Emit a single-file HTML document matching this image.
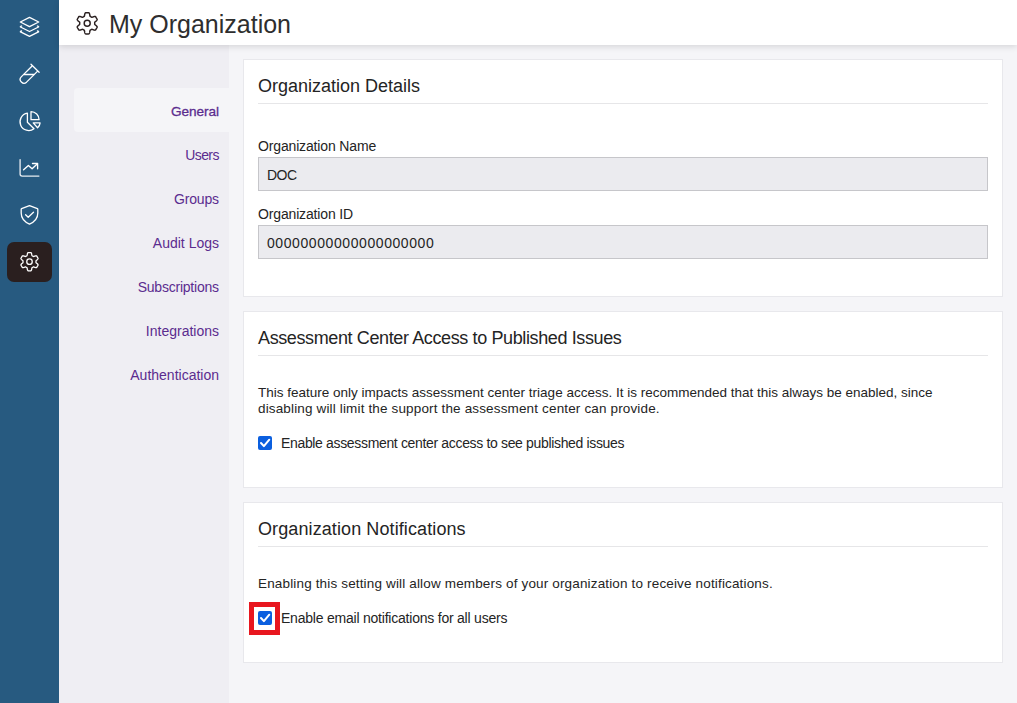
<!DOCTYPE html>
<html><head><meta charset="utf-8">
<style>
*{box-sizing:border-box;margin:0;padding:0}
html,body{width:1017px;height:703px;overflow:hidden;background:#f5f5f8;font-family:"Liberation Sans",sans-serif;color:#242424}
#side{position:absolute;left:0;top:0;width:59px;height:703px;background:#275a80}
#head{position:absolute;left:0;top:0;width:1017px;height:45px;z-index:3}
#head .bg{position:absolute;left:59px;top:0;width:958px;height:45px;background:#fff;box-shadow:0 2px 6px rgba(0,0,0,.12)}
#head .t{position:absolute;left:109px;top:10px;font-size:25px;color:#2e2e2e;white-space:nowrap}
#nav{position:absolute;left:59px;top:45px;width:170px;height:658px;background:#efeef3}
.ni{position:absolute;right:10px;font-size:14px;color:#5b2c8f;white-space:nowrap;text-align:right}
.nact{position:absolute;left:15px;top:43px;width:155px;height:44px;background:#f5f5f8;border-radius:4px 0 0 4px}
.card{position:absolute;left:243px;width:760px;background:#fff;border:1px solid #e8e8ec}
.ct{position:absolute;left:14px;font-size:18px;color:#242424;white-space:nowrap}
.dv{position:absolute;left:14px;width:730px;height:1px;background:#e6e6e8}
.lb{position:absolute;left:14px;font-size:14px;letter-spacing:-0.15px;color:#242424;white-space:nowrap}
.inp{position:absolute;left:14px;width:730px;height:34px;background:#ebebef;border:1px solid #c6c6ca}
.inp span{position:absolute;left:8px;top:9px;font-size:14px;color:#242424;white-space:nowrap}
.p{position:absolute;left:14px;font-size:13.5px;line-height:15.5px;color:#242424;white-space:nowrap}
.cb{position:absolute;left:14px;width:14px;height:14px;background:#0b5fdf;border-radius:2px}
.cb svg{position:absolute;left:0;top:0}
.cl{position:absolute;left:37px;font-size:14px;color:#242424;white-space:nowrap}
.red{position:absolute;left:5px;width:31px;height:33px;border:5px solid #e8161f}
</style></head><body>
<div id="side"><svg width="59" height="703" style="position:absolute;left:0;top:0" fill="none" stroke="#fff" stroke-linecap="round" stroke-linejoin="round">
<g stroke-width="1.3">
<path d="M29.5,17.4 L38.7,22 L29.5,26.6 L20.3,22 Z"/>
<path d="M21.6,26.0 Q20.0,26.6 20.5,27.0 L29.5,31.5 L38.5,27.0 Q39.0,26.6 37.4,26.0"/>
<path d="M21.6,30.9 Q20.0,31.5 20.5,31.9 L29.5,36.4 L38.5,31.9 Q39.0,31.5 37.4,30.9"/>
</g>
<g stroke-width="1.3">
<path d="M31,64.3 L39.1,72.3"/>
<path d="M32.1,66.05 L21.25,76.85 A3.75,3.75 0 0 0 26.55,82.15 L37.4,71.35"/>
<path d="M24.0,74.5 L33.9,74.5"/>
</g>
<g stroke-width="1.3">
<path d="M27.4,113.2 A8.7,8.7 0 1 0 34.0,128.7 L27.4,122.2 Z"/>
<path d="M31,111.6 L31,119.7 L39.1,119.7 A8.1,8.1 0 0 0 31,111.6 Z"/>
<path d="M33.2,122.9 L40.1,122.9 A7.5,7.5 0 0 1 37.6,127.8 Z"/>
</g>
<g stroke-width="1.35">
<path d="M20.1,159.6 L20.1,174 Q20.1,176.1 22.2,176.1 L38.9,176.1" stroke="#e6ebf0"/>
<path d="M23.6,169.8 L28.4,165.4 L32.1,168.8 L37.4,163.7"/>
<path d="M32.5,163.5 L37.6,163.5 L37.6,168.8"/>
</g>
<g stroke-width="1.3">
<path d="M29.5,205.7 L21.6,208.7 Q21.2,208.9 21.2,209.3 L21.2,213 C21.2,218.2 24.5,221.9 29.5,224.1 C34.5,221.9 37.8,218.2 37.8,213 L37.8,209.3 Q37.8,208.9 37.4,208.7 Z"/>
<path d="M25.6,214.8 L28.2,217.3 L33.5,212.3"/>
</g>
<rect x="7" y="242" width="45" height="40" rx="7" fill="#2a1f1f" stroke="none"/>
<g stroke-width="1.3">
<path d="M36.00,261.70 L36.00,261.59 L36.00,261.47 L35.99,261.36 L35.98,261.25 L35.98,261.13 L35.96,261.02 L35.98,260.90 L36.05,260.78 L36.16,260.64 L36.31,260.50 L36.50,260.34 L36.70,260.17 L36.92,259.99 L37.15,259.79 L37.37,259.59 L37.57,259.39 L37.75,259.18 L37.89,258.97 L37.99,258.78 L38.05,258.59 L38.06,258.41 L38.02,258.26 L37.94,258.12 L37.86,257.98 L37.78,257.84 L37.70,257.70 L37.62,257.56 L37.54,257.43 L37.46,257.29 L37.38,257.15 L37.30,257.01 L37.22,256.87 L37.14,256.74 L37.06,256.60 L36.98,256.46 L36.90,256.32 L36.82,256.18 L36.74,256.04 L36.63,255.93 L36.47,255.85 L36.28,255.81 L36.06,255.80 L35.81,255.82 L35.54,255.87 L35.26,255.94 L34.97,256.03 L34.70,256.13 L34.43,256.23 L34.18,256.32 L33.95,256.40 L33.75,256.46 L33.57,256.49 L33.43,256.48 L33.32,256.44 L33.23,256.38 L33.13,256.31 L33.04,256.25 L32.94,256.19 L32.85,256.13 L32.75,256.07 L32.65,256.01 L32.55,255.96 L32.45,255.91 L32.35,255.86 L32.25,255.81 L32.14,255.76 L32.05,255.69 L31.98,255.57 L31.92,255.40 L31.87,255.20 L31.82,254.96 L31.78,254.70 L31.73,254.42 L31.67,254.12 L31.61,253.83 L31.53,253.56 L31.44,253.30 L31.33,253.07 L31.21,252.88 L31.08,252.74 L30.93,252.64 L30.78,252.60 L30.62,252.60 L30.46,252.60 L30.30,252.60 L30.14,252.60 L29.98,252.60 L29.82,252.60 L29.66,252.60 L29.50,252.60 L29.34,252.60 L29.18,252.60 L29.02,252.60 L28.86,252.60 L28.70,252.60 L28.54,252.60 L28.38,252.60 L28.22,252.60 L28.07,252.64 L27.92,252.74 L27.79,252.88 L27.67,253.07 L27.56,253.30 L27.47,253.56 L27.39,253.83 L27.33,254.12 L27.27,254.42 L27.22,254.70 L27.18,254.96 L27.13,255.20 L27.08,255.40 L27.02,255.57 L26.95,255.69 L26.86,255.76 L26.75,255.81 L26.65,255.86 L26.55,255.91 L26.45,255.96 L26.35,256.01 L26.25,256.07 L26.15,256.13 L26.06,256.19 L25.96,256.25 L25.87,256.31 L25.77,256.38 L25.68,256.44 L25.57,256.48 L25.43,256.49 L25.25,256.46 L25.05,256.40 L24.82,256.32 L24.57,256.23 L24.30,256.13 L24.03,256.03 L23.74,255.94 L23.46,255.87 L23.19,255.82 L22.94,255.80 L22.72,255.81 L22.53,255.85 L22.37,255.93 L22.26,256.04 L22.18,256.18 L22.10,256.32 L22.02,256.46 L21.94,256.60 L21.86,256.74 L21.78,256.87 L21.70,257.01 L21.62,257.15 L21.54,257.29 L21.46,257.43 L21.38,257.56 L21.30,257.70 L21.22,257.84 L21.14,257.98 L21.06,258.12 L20.98,258.26 L20.94,258.41 L20.95,258.59 L21.01,258.78 L21.11,258.97 L21.25,259.18 L21.43,259.39 L21.63,259.59 L21.85,259.79 L22.08,259.99 L22.30,260.17 L22.50,260.34 L22.69,260.50 L22.84,260.64 L22.95,260.78 L23.02,260.90 L23.04,261.02 L23.02,261.13 L23.02,261.25 L23.01,261.36 L23.00,261.47 L23.00,261.59 L23.00,261.70 L23.00,261.81 L23.00,261.93 L23.01,262.04 L23.02,262.15 L23.02,262.27 L23.04,262.38 L23.02,262.50 L22.95,262.62 L22.84,262.76 L22.69,262.90 L22.50,263.06 L22.30,263.23 L22.08,263.41 L21.85,263.61 L21.63,263.81 L21.43,264.01 L21.25,264.22 L21.11,264.43 L21.01,264.62 L20.95,264.81 L20.94,264.99 L20.98,265.14 L21.06,265.28 L21.14,265.42 L21.22,265.56 L21.30,265.70 L21.38,265.84 L21.46,265.97 L21.54,266.11 L21.62,266.25 L21.70,266.39 L21.78,266.53 L21.86,266.66 L21.94,266.80 L22.02,266.94 L22.10,267.08 L22.18,267.22 L22.26,267.36 L22.37,267.47 L22.53,267.55 L22.72,267.59 L22.94,267.60 L23.19,267.58 L23.46,267.53 L23.74,267.46 L24.03,267.37 L24.30,267.27 L24.57,267.17 L24.82,267.08 L25.05,267.00 L25.25,266.94 L25.43,266.91 L25.57,266.92 L25.68,266.96 L25.77,267.02 L25.87,267.09 L25.96,267.15 L26.06,267.21 L26.15,267.27 L26.25,267.33 L26.35,267.39 L26.45,267.44 L26.55,267.49 L26.65,267.54 L26.75,267.59 L26.86,267.64 L26.95,267.71 L27.02,267.83 L27.08,268.00 L27.13,268.20 L27.18,268.44 L27.22,268.70 L27.27,268.98 L27.33,269.28 L27.39,269.57 L27.47,269.84 L27.56,270.10 L27.67,270.33 L27.79,270.52 L27.92,270.66 L28.07,270.76 L28.22,270.80 L28.38,270.80 L28.54,270.80 L28.70,270.80 L28.86,270.80 L29.02,270.80 L29.18,270.80 L29.34,270.80 L29.50,270.80 L29.66,270.80 L29.82,270.80 L29.98,270.80 L30.14,270.80 L30.30,270.80 L30.46,270.80 L30.62,270.80 L30.78,270.80 L30.93,270.76 L31.08,270.66 L31.21,270.52 L31.33,270.33 L31.44,270.10 L31.53,269.84 L31.61,269.57 L31.67,269.28 L31.73,268.98 L31.78,268.70 L31.82,268.44 L31.87,268.20 L31.92,268.00 L31.98,267.83 L32.05,267.71 L32.14,267.64 L32.25,267.59 L32.35,267.54 L32.45,267.49 L32.55,267.44 L32.65,267.39 L32.75,267.33 L32.85,267.27 L32.94,267.21 L33.04,267.15 L33.13,267.09 L33.23,267.02 L33.32,266.96 L33.43,266.92 L33.57,266.91 L33.75,266.94 L33.95,267.00 L34.18,267.08 L34.43,267.17 L34.70,267.27 L34.97,267.37 L35.26,267.46 L35.54,267.53 L35.81,267.58 L36.06,267.60 L36.28,267.59 L36.47,267.55 L36.63,267.47 L36.74,267.36 L36.82,267.22 L36.90,267.08 L36.98,266.94 L37.06,266.80 L37.14,266.66 L37.22,266.53 L37.30,266.39 L37.38,266.25 L37.46,266.11 L37.54,265.97 L37.62,265.84 L37.70,265.70 L37.78,265.56 L37.86,265.42 L37.94,265.28 L38.02,265.14 L38.06,264.99 L38.05,264.81 L37.99,264.62 L37.89,264.43 L37.75,264.22 L37.57,264.01 L37.37,263.81 L37.15,263.61 L36.92,263.41 L36.70,263.23 L36.50,263.06 L36.31,262.90 L36.16,262.76 L36.05,262.62 L35.98,262.50 L35.96,262.38 L35.98,262.27 L35.98,262.15 L35.99,262.04 L36.00,261.93 L36.00,261.81Z"/>
<circle cx="29.5" cy="261.7" r="2.75"/>
</g>
</svg></div>
<div id="head"><div class="bg"></div><svg width="120" height="45" style="position:absolute;left:0;top:0" fill="none" stroke="#2a2020" stroke-linecap="round" stroke-linejoin="round" stroke-width="1.45">
<path d="M94.70,23.30 L94.70,23.17 L94.70,23.04 L94.69,22.91 L94.68,22.78 L94.67,22.65 L94.66,22.52 L94.68,22.38 L94.75,22.24 L94.88,22.08 L95.06,21.91 L95.28,21.73 L95.52,21.53 L95.78,21.32 L96.05,21.09 L96.31,20.86 L96.55,20.62 L96.77,20.37 L96.95,20.13 L97.08,19.90 L97.15,19.68 L97.17,19.47 L97.12,19.29 L97.03,19.13 L96.94,18.96 L96.84,18.80 L96.75,18.64 L96.66,18.48 L96.56,18.32 L96.47,18.16 L96.38,18.00 L96.29,17.84 L96.19,17.68 L96.10,17.52 L96.01,17.36 L95.92,17.20 L95.82,17.04 L95.73,16.87 L95.64,16.71 L95.50,16.58 L95.31,16.49 L95.08,16.45 L94.82,16.44 L94.52,16.47 L94.20,16.54 L93.87,16.63 L93.54,16.74 L93.21,16.86 L92.89,16.98 L92.60,17.09 L92.33,17.19 L92.10,17.25 L91.90,17.29 L91.73,17.28 L91.61,17.23 L91.50,17.16 L91.39,17.08 L91.28,17.01 L91.17,16.94 L91.06,16.87 L90.95,16.80 L90.84,16.74 L90.72,16.68 L90.60,16.62 L90.49,16.56 L90.37,16.50 L90.25,16.45 L90.14,16.36 L90.06,16.23 L89.99,16.04 L89.93,15.80 L89.88,15.52 L89.83,15.21 L89.77,14.88 L89.71,14.53 L89.64,14.19 L89.55,13.86 L89.45,13.55 L89.33,13.28 L89.19,13.05 L89.04,12.87 L88.87,12.75 L88.69,12.70 L88.50,12.70 L88.31,12.70 L88.13,12.70 L87.94,12.70 L87.76,12.70 L87.57,12.70 L87.39,12.70 L87.20,12.70 L87.01,12.70 L86.83,12.70 L86.64,12.70 L86.46,12.70 L86.27,12.70 L86.09,12.70 L85.90,12.70 L85.71,12.70 L85.53,12.75 L85.36,12.87 L85.21,13.05 L85.07,13.28 L84.95,13.55 L84.85,13.86 L84.76,14.19 L84.69,14.53 L84.63,14.88 L84.57,15.21 L84.52,15.52 L84.47,15.80 L84.41,16.04 L84.34,16.23 L84.26,16.36 L84.15,16.45 L84.03,16.50 L83.91,16.56 L83.80,16.62 L83.68,16.68 L83.56,16.74 L83.45,16.80 L83.34,16.87 L83.23,16.94 L83.12,17.01 L83.01,17.08 L82.90,17.16 L82.79,17.23 L82.67,17.28 L82.50,17.29 L82.30,17.25 L82.07,17.19 L81.80,17.09 L81.51,16.98 L81.19,16.86 L80.86,16.74 L80.53,16.63 L80.20,16.54 L79.88,16.47 L79.58,16.44 L79.32,16.45 L79.09,16.49 L78.90,16.58 L78.76,16.71 L78.67,16.87 L78.58,17.04 L78.48,17.20 L78.39,17.36 L78.30,17.52 L78.21,17.68 L78.11,17.84 L78.02,18.00 L77.93,18.16 L77.84,18.32 L77.74,18.48 L77.65,18.64 L77.56,18.80 L77.46,18.96 L77.37,19.13 L77.28,19.29 L77.23,19.47 L77.25,19.68 L77.32,19.90 L77.45,20.13 L77.63,20.37 L77.85,20.62 L78.09,20.86 L78.35,21.09 L78.62,21.32 L78.88,21.53 L79.12,21.73 L79.34,21.91 L79.52,22.08 L79.65,22.24 L79.72,22.38 L79.74,22.52 L79.73,22.65 L79.72,22.78 L79.71,22.91 L79.70,23.04 L79.70,23.17 L79.70,23.30 L79.70,23.43 L79.70,23.56 L79.71,23.69 L79.72,23.82 L79.73,23.95 L79.74,24.08 L79.72,24.22 L79.65,24.36 L79.52,24.52 L79.34,24.69 L79.12,24.87 L78.88,25.07 L78.62,25.28 L78.35,25.51 L78.09,25.74 L77.85,25.98 L77.63,26.23 L77.45,26.47 L77.32,26.70 L77.25,26.92 L77.23,27.13 L77.28,27.31 L77.37,27.47 L77.46,27.64 L77.56,27.80 L77.65,27.96 L77.74,28.12 L77.84,28.28 L77.93,28.44 L78.02,28.60 L78.11,28.76 L78.21,28.92 L78.30,29.08 L78.39,29.24 L78.48,29.40 L78.58,29.56 L78.67,29.73 L78.76,29.89 L78.90,30.02 L79.09,30.11 L79.32,30.15 L79.58,30.16 L79.88,30.13 L80.20,30.06 L80.53,29.97 L80.86,29.86 L81.19,29.74 L81.51,29.62 L81.80,29.51 L82.07,29.41 L82.30,29.35 L82.50,29.31 L82.67,29.32 L82.79,29.37 L82.90,29.44 L83.01,29.52 L83.12,29.59 L83.23,29.66 L83.34,29.73 L83.45,29.80 L83.56,29.86 L83.68,29.92 L83.80,29.98 L83.91,30.04 L84.03,30.10 L84.15,30.15 L84.26,30.24 L84.34,30.37 L84.41,30.56 L84.47,30.80 L84.52,31.08 L84.57,31.39 L84.63,31.72 L84.69,32.07 L84.76,32.41 L84.85,32.74 L84.95,33.05 L85.07,33.32 L85.21,33.55 L85.36,33.73 L85.53,33.85 L85.71,33.90 L85.90,33.90 L86.09,33.90 L86.27,33.90 L86.46,33.90 L86.64,33.90 L86.83,33.90 L87.01,33.90 L87.20,33.90 L87.39,33.90 L87.57,33.90 L87.76,33.90 L87.94,33.90 L88.13,33.90 L88.31,33.90 L88.50,33.90 L88.69,33.90 L88.87,33.85 L89.04,33.73 L89.19,33.55 L89.33,33.32 L89.45,33.05 L89.55,32.74 L89.64,32.41 L89.71,32.07 L89.77,31.72 L89.83,31.39 L89.88,31.08 L89.93,30.80 L89.99,30.56 L90.06,30.37 L90.14,30.24 L90.25,30.15 L90.37,30.10 L90.49,30.04 L90.60,29.98 L90.72,29.92 L90.84,29.86 L90.95,29.80 L91.06,29.73 L91.17,29.66 L91.28,29.59 L91.39,29.52 L91.50,29.44 L91.61,29.37 L91.73,29.32 L91.90,29.31 L92.10,29.35 L92.33,29.41 L92.60,29.51 L92.89,29.62 L93.21,29.74 L93.54,29.86 L93.87,29.97 L94.20,30.06 L94.52,30.13 L94.82,30.16 L95.08,30.15 L95.31,30.11 L95.50,30.02 L95.64,29.89 L95.73,29.73 L95.82,29.56 L95.92,29.40 L96.01,29.24 L96.10,29.08 L96.19,28.92 L96.29,28.76 L96.38,28.60 L96.47,28.44 L96.56,28.28 L96.66,28.12 L96.75,27.96 L96.84,27.80 L96.94,27.64 L97.03,27.47 L97.12,27.31 L97.17,27.13 L97.15,26.92 L97.08,26.70 L96.95,26.47 L96.77,26.23 L96.55,25.98 L96.31,25.74 L96.05,25.51 L95.78,25.28 L95.52,25.07 L95.28,24.87 L95.06,24.69 L94.88,24.52 L94.75,24.36 L94.68,24.22 L94.66,24.08 L94.67,23.95 L94.68,23.82 L94.69,23.69 L94.70,23.56 L94.70,23.43Z"/>
<circle cx="87.2" cy="23.3" r="3.0"/>
</svg><div class="t">My Organization</div></div>
<div id="nav">
  <div class="nact"></div>
  <div class="ni" style="top:58.5px;font-size:13.6px;-webkit-text-stroke:.3px #5b2c8f;letter-spacing:-.05px;right:10px">General</div>
  <div class="ni" style="top:102px;letter-spacing:-.6px;right:10.2px">Users</div>
  <div class="ni" style="top:146px;letter-spacing:-.2px;right:10.2px">Groups</div>
  <div class="ni" style="top:190px">Audit Logs</div>
  <div class="ni" style="top:234px;letter-spacing:-.22px;right:10.2px">Subscriptions</div>
  <div class="ni" style="top:278px">Integrations</div>
  <div class="ni" style="top:322px">Authentication</div>
</div>

<div class="card" style="top:59px;height:238px">
  <div class="ct" style="top:16px">Organization Details</div>
  <div class="dv" style="top:43px"></div>
  <div class="lb" style="top:78px">Organization Name</div>
  <div class="inp" style="top:97px"><span style="letter-spacing:-.5px">DOC</span></div>
  <div class="lb" style="top:146px">Organization ID</div>
  <div class="inp" style="top:165px"><span style="letter-spacing:.58px">00000000000000000000</span></div>
</div>

<div class="card" style="top:311px;height:177px">
  <div class="ct" style="top:16px;letter-spacing:-.38px">Assessment Center Access to Published Issues</div>
  <div class="dv" style="top:43px"></div>
  <div class="p" style="top:73px">This feature only impacts assessment center triage access. It is recommended that this always be enabled, since<br><span style="letter-spacing:.15px">disabling will limit the support the assessment center can provide.</span></div>
  <div class="cb" style="top:124px"><svg width="14" height="14"><path d="M3,7 L5.9,10.1 L11.3,3.7" fill="none" stroke="#fff" stroke-width="2" stroke-linecap="round" stroke-linejoin="round"/></svg></div>
  <div class="cl" style="top:123px;letter-spacing:-.34px">Enable assessment center access to see published issues</div>
</div>

<div class="card" style="top:502px;height:161px">
  <div class="ct" style="top:16px;letter-spacing:.1px">Organization Notifications</div>
  <div class="dv" style="top:43px"></div>
  <div class="p" style="top:73px;letter-spacing:.156px">Enabling this setting will allow members of your organization to receive notifications.</div>
  <div class="red" style="top:99px"></div>
  <div class="cb" style="top:108px"><svg width="14" height="14"><path d="M3,7 L5.9,10.1 L11.3,3.7" fill="none" stroke="#fff" stroke-width="2" stroke-linecap="round" stroke-linejoin="round"/></svg></div>
  <div class="cl" style="top:107px;letter-spacing:-.22px">Enable email notifications for all users</div>
</div>
</body></html>
